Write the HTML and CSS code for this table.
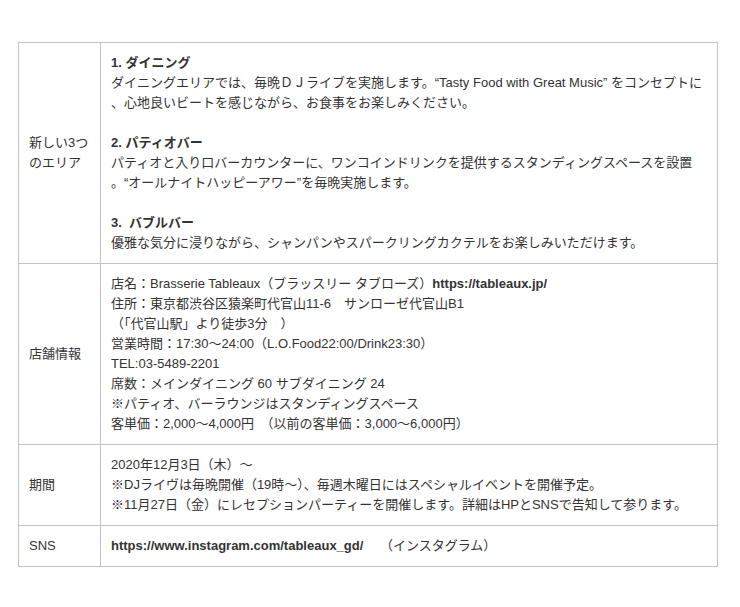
FILE: index.html
```html
<!DOCTYPE html>
<html lang="ja">
<head>
    <meta charset="UTF-8">
    <meta name="viewport" content="width=device-width, initial-scale=1.0">
    <title>Brasserie Tableaux | 店舗情報</title>
    <link rel="stylesheet" href="styles.css">
</head>
<body>
    <div class="page">
        <table class="info-table">
            <tr>
                <th class="label">新しい3つのエリア</th>
                <td class="detail">
                    <strong>1. ダイニング</strong><br>
                    ダイニングエリアでは、毎晩ＤＪライブを実施します。“Tasty Food with Great Music” をコンセプトに<br>
                    、心地良いビートを感じながら、お食事をお楽しみください。<br>
                    <br>
                    <strong>2. パティオバー</strong><br>
                    パティオと入り口バーカウンターに、ワンコインドリンクを提供するスタンディングスペースを設置<br>
                    。“オールナイトハッピーアワー”を毎晩実施します。<br>
                    <br>
                    <strong>3.&nbsp; バブルバー</strong><br>
                    優雅な気分に浸りながら、シャンパンやスパークリングカクテルをお楽しみいただけます。
                </td>
            </tr>
            <tr>
                <th class="label">店舗情報</th>
                <td class="detail">
                    店名：Brasserie Tableaux（ブラッスリー タブローズ）<strong>https://tableaux.jp/</strong><br>
                    住所：東京都渋谷区猿楽町代官山11-6　サンローゼ代官山B1<br>
                    （「代官山駅」より徒歩3分　）<br>
                    営業時間：17:30～24:00（L.O.Food22:00/Drink23:30）<br>
                    TEL:03-5489-2201<br>
                    席数：メインダイニング 60 サブダイニング 24<br>
                    ※パティオ、バーラウンジはスタンディングスペース<br>
                    客単価：2,000～4,000円　（以前の客単価：3,000～6,000円）
                </td>
            </tr>
            <tr>
                <th class="label">期間</th>
                <td class="detail">
                    2020年12月3日（木）～<br>
                    ※DJライヴは毎晩開催（19時～）、毎週木曜日にはスペシャルイベントを開催予定。<br>
                    ※11月27日（金）にレセプションパーティーを開催します。詳細はHPとSNSで告知して参ります。
                </td>
            </tr>
            <tr>
                <th class="label">SNS</th>
                <td class="detail">
                    <strong>https://www.instagram.com/tableaux_gd/</strong>　&nbsp;（インスタグラム）
                </td>
            </tr>
        </table>
    </div>
</body>
</html>
```

FILE: styles.css
```css
* {
    box-sizing: border-box;
}

body {
    margin: 0;
    background: #fff;
    color: #333;
    font-family: "Liberation Sans", Arial, "Noto Sans CJK JP", sans-serif;
    font-size: 13px;
    line-height: 20px;
}

.page {
    padding: 42px 22px 40px 18px;
}

.info-table {
    width: 700px;
    border-collapse: collapse;
    border: 1px solid #c2c2c2;
}

.info-table th,
.info-table td {
    border: 1px solid #c2c2c2;
    padding: 10px;
    vertical-align: middle;
    text-align: left;
}

.label {
    width: 82px;
    font-weight: normal;
}

.detail strong {
    font-weight: bold;
}
```
